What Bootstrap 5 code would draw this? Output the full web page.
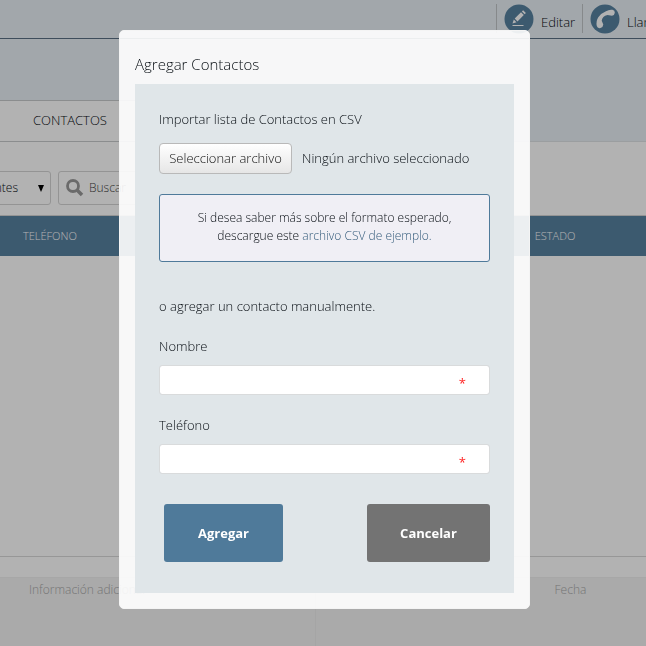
<!DOCTYPE html>
<html lang="es">
<head>
<meta charset="utf-8">
<meta name="viewport" content="width=device-width, initial-scale=1">
<title>Agregar Contactos</title>
<link href="https://cdn.jsdelivr.net/npm/bootstrap@5.3.0/dist/css/bootstrap.min.css" rel="stylesheet">
<style>
:root { --brand: #4f7a9a; }
body { font-family: "Open Sans", "Noto Sans", sans-serif; font-weight: 300; font-size: 13px; line-height: 20px; color: #060c12; background: #fff; }
a { text-decoration: none; }
.backpage { min-height: 100vh; overflow: hidden; }
.hero { background: #e9f0f5; }
.topbar { height: 39px; border-bottom: 1px solid #5a6f83; padding-top: 4px; }
.tool { width: 86px; height: 29px; color: #060c12; border-left: 1px solid #c0c4c8; padding-left: 7px; white-space: nowrap; }
.tool svg { width: 30px; height: 30px; flex: none; }
.tool span { padding: 8px 0 0 7px; }
.tool-call { width: 64px; }
.hero-space { height: 61px; }
.tabs { height: 42px; border: solid #c8cacc; border-width: 1px 0; background: #fff; padding: 0 0 2px 33px; }
.tabs a { color: #060c12; }
.filters { height: 74px; padding-top: 29px; border-bottom: 1px solid #d5d5d5; }
.filters .form-select, .search { width: 150px; height: 34px; border: 1px solid #d4d4d4; border-radius: 3px; font-size: 12px; font-weight: 300; }
.filter-kind { margin-left: -99px; margin-right: 7px; }
.filters .form-select { color: #060c12; padding: 0 30px 0 64px; background-size: 8px 7px; background-position: right 5px center; background-image: url("data:image/svg+xml,%3Csvg xmlns='http://www.w3.org/2000/svg' viewBox='0 0 8 7'%3E%3Cpath d='M1 0h6L4 7z' fill='%23000'/%3E%3C/svg%3E"); }
.search { padding-left: 7px; }
.search svg { width: 18px; height: 18px; flex: none; }
.search input { font-size: 12px; font-weight: 300; outline: 0; padding-left: 5px; }
.search input::placeholder { color: #444; opacity: 1; }
.grid-table { font-size: 11px; table-layout: fixed; }
.grid-table th { height: 40px; background: #5781a0; color: #fff; font-weight: 300; padding-bottom: 2px; }
.grid-table th:first-child { padding-left: 23px; }
.grid-table th:last-child { width: 18%; padding-left: 5px; }
.grid-empty { height: 300px; }
.strip { height: 21px; border-top: 1px solid #d9d9d9; }
.details { background: #f4f4f4; border-top: 1px solid #f0f0f0; color: #a8a8a8; font-size: 12px; min-height: 69px; }
.details > div { width: 51.3%; padding-top: 2px; }
.details > div:first-child { width: 48.7%; padding-left: 29px; }
.details > div + div { border-left: 1px solid #ececec; padding-left: 239px; }
.shade { background: rgba(0, 0, 0, .3); }
.contact-modal { padding-left: 3px; }
.contact-modal .modal-dialog { max-width: 411px; margin: 30px auto; }
.contact-modal .modal-content { background: rgba(255, 255, 255, .9); border: 1px solid #f4f4f4; border-radius: 5px; padding: 23px 15px 15px; color: inherit; }
.modal-content h1 { font-size: 15px; line-height: 20px; font-weight: 300; margin-bottom: 10px; }
.panel { background: #e0e6e9; padding: 25px 24px 31px; }
.panel p { margin-bottom: 0; }
.file-row { margin: 14px 0 20px; }
.btn-file { width: 133px; height: 31px; margin-right: 10px; padding: 0 0 2px; font-weight: 300; white-space: nowrap; background: linear-gradient(#fff, #e6e6e6); border: 1px solid #b9b9b9; border-radius: 4px; color: #111; }
.file-name { padding-bottom: 2px; }
.hint { height: 68px; border: 1px solid var(--brand); border-radius: 3px; background: #f0eff5; font-size: 12px; line-height: 18px; padding-bottom: 2px; margin-bottom: 34px; }
.hint a { color: #355c7c; }
.manual { padding-bottom: 20px; }
.field + .field { margin-top: 20px; }
.panel label { margin-bottom: 8px; line-height: 21px; }
.panel .form-control { height: 30px; border: 1px solid #d9dbdc; border-radius: 3px; }
.req { right: 24px; bottom: 2px; color: #f22; font-weight: 400; }
.actions { margin-top: 30px; padding-left: 5px; }
.actions .btn { height: 58px; width: 119px; border: 0; border-radius: 3px; color: #fff; font-size: 13px; font-weight: 700; line-height: 20px; }
.actions .btn-add { background: var(--brand); }
.actions .btn-cancel { background: #737373; width: 123px; }
</style>
</head>
<body>
<div class="backpage d-flex flex-column">
  <header class="hero">
    <div class="topbar d-flex justify-content-end">
      <a href="#" class="tool d-flex"><svg viewBox="0 0 30 30"><circle cx="15" cy="15" r="14.500" fill="#5781a0"/><path d="M8.500 19.500l1.300-4 2.700 2.700zM10.700 14.600l6.300-6.300 2.800 2.800-6.300 6.300zM17.900 7.400l1.200-1.200 2.800 2.800-1.200 1.200z" fill="#fff"/><path d="M8.500 21.500h11" stroke="#fff"/></svg><span>Editar</span></a>
      <a href="#" class="tool tool-call d-flex"><svg viewBox="0 0 30 30"><circle cx="15" cy="15" r="14.500" fill="#5781a0"/><path d="M16 7.300Q19 5.300 22.500 5.800 25 6.500 24.800 8.800 24.500 11.500 22 11.800L17.500 11Q12.200 12.300 11.700 16.800L13.300 20.500Q13.200 23 10.500 24 7.500 24.700 6.800 22 5.800 17 8.300 13.300 11 9.300 16 7.300z" fill="#fff"/></svg><span>Llamar</span></a>
    </div>
    <div class="hero-space"></div>
    <div class="row g-0"><nav class="tabs col-6 d-flex align-items-center"><a href="#">CONTACTOS</a></nav><div class="col-6 border-bottom"></div></div>
  </header>
  <div class="filters d-flex">
    <select class="form-select filter-kind" aria-label="Tipo"><option>Recientes</option></select>
    <div class="search d-flex align-items-center"><svg viewBox="0 0 18 18" fill="none" stroke="#999"><circle cx="7" cy="7" r="5.500" stroke-width="2.800"/><path d="M11 11l5 5" stroke-width="3.500"/></svg><input class="border-0 bg-transparent w-100" placeholder="Buscar" aria-label="Buscar"></div>
  </div>
  <table class="grid-table w-100"><thead><tr><th>TELÉFONO</th><th class="w-50"></th><th>ESTADO</th></tr></thead></table>
  <div class="grid-empty"></div>
  <div class="strip"></div>
  <footer class="details d-flex flex-grow-1"><div>Información adicional</div><div>Fecha</div></footer>
</div>
<div class="modal contact-modal shade d-block" role="dialog" aria-labelledby="dlg-title">
  <div class="modal-dialog">
    <form class="modal-content">
      <h1 id="dlg-title">Agregar Contactos</h1>
      <div class="panel">
        <p>Importar lista de Contactos en CSV</p>
        <div class="file-row d-flex align-items-center"><button type="button" class="btn-file" onclick="document.getElementById('csv').click()">Seleccionar archivo</button><span class="file-name">Ningún archivo seleccionado</span><input id="csv" type="file" class="d-none" accept=".csv" aria-label="Archivo CSV"></div>
        <div class="hint d-flex align-items-center justify-content-center text-center"><div>Si desea saber más sobre el formato esperado,<br>descargue este <a href="#">archivo CSV de ejemplo.</a></div></div>
        <p class="manual">o agregar un contacto manualmente.</p>
        <div class="field position-relative"><label for="name" class="d-block">Nombre</label><input id="name" class="form-control"><span class="req position-absolute">*</span></div>
        <div class="field position-relative"><label for="phone" class="d-block">Teléfono</label><input id="phone" class="form-control"><span class="req position-absolute">*</span></div>
        <div class="actions d-flex justify-content-between"><button type="submit" class="btn btn-add">Agregar</button><button type="button" class="btn btn-cancel">Cancelar</button></div>
      </div>
    </form>
  </div>
</div>
<script src="https://cdn.jsdelivr.net/npm/bootstrap@5.3.0/dist/js/bootstrap.bundle.min.js"></script>
</body>
</html>
